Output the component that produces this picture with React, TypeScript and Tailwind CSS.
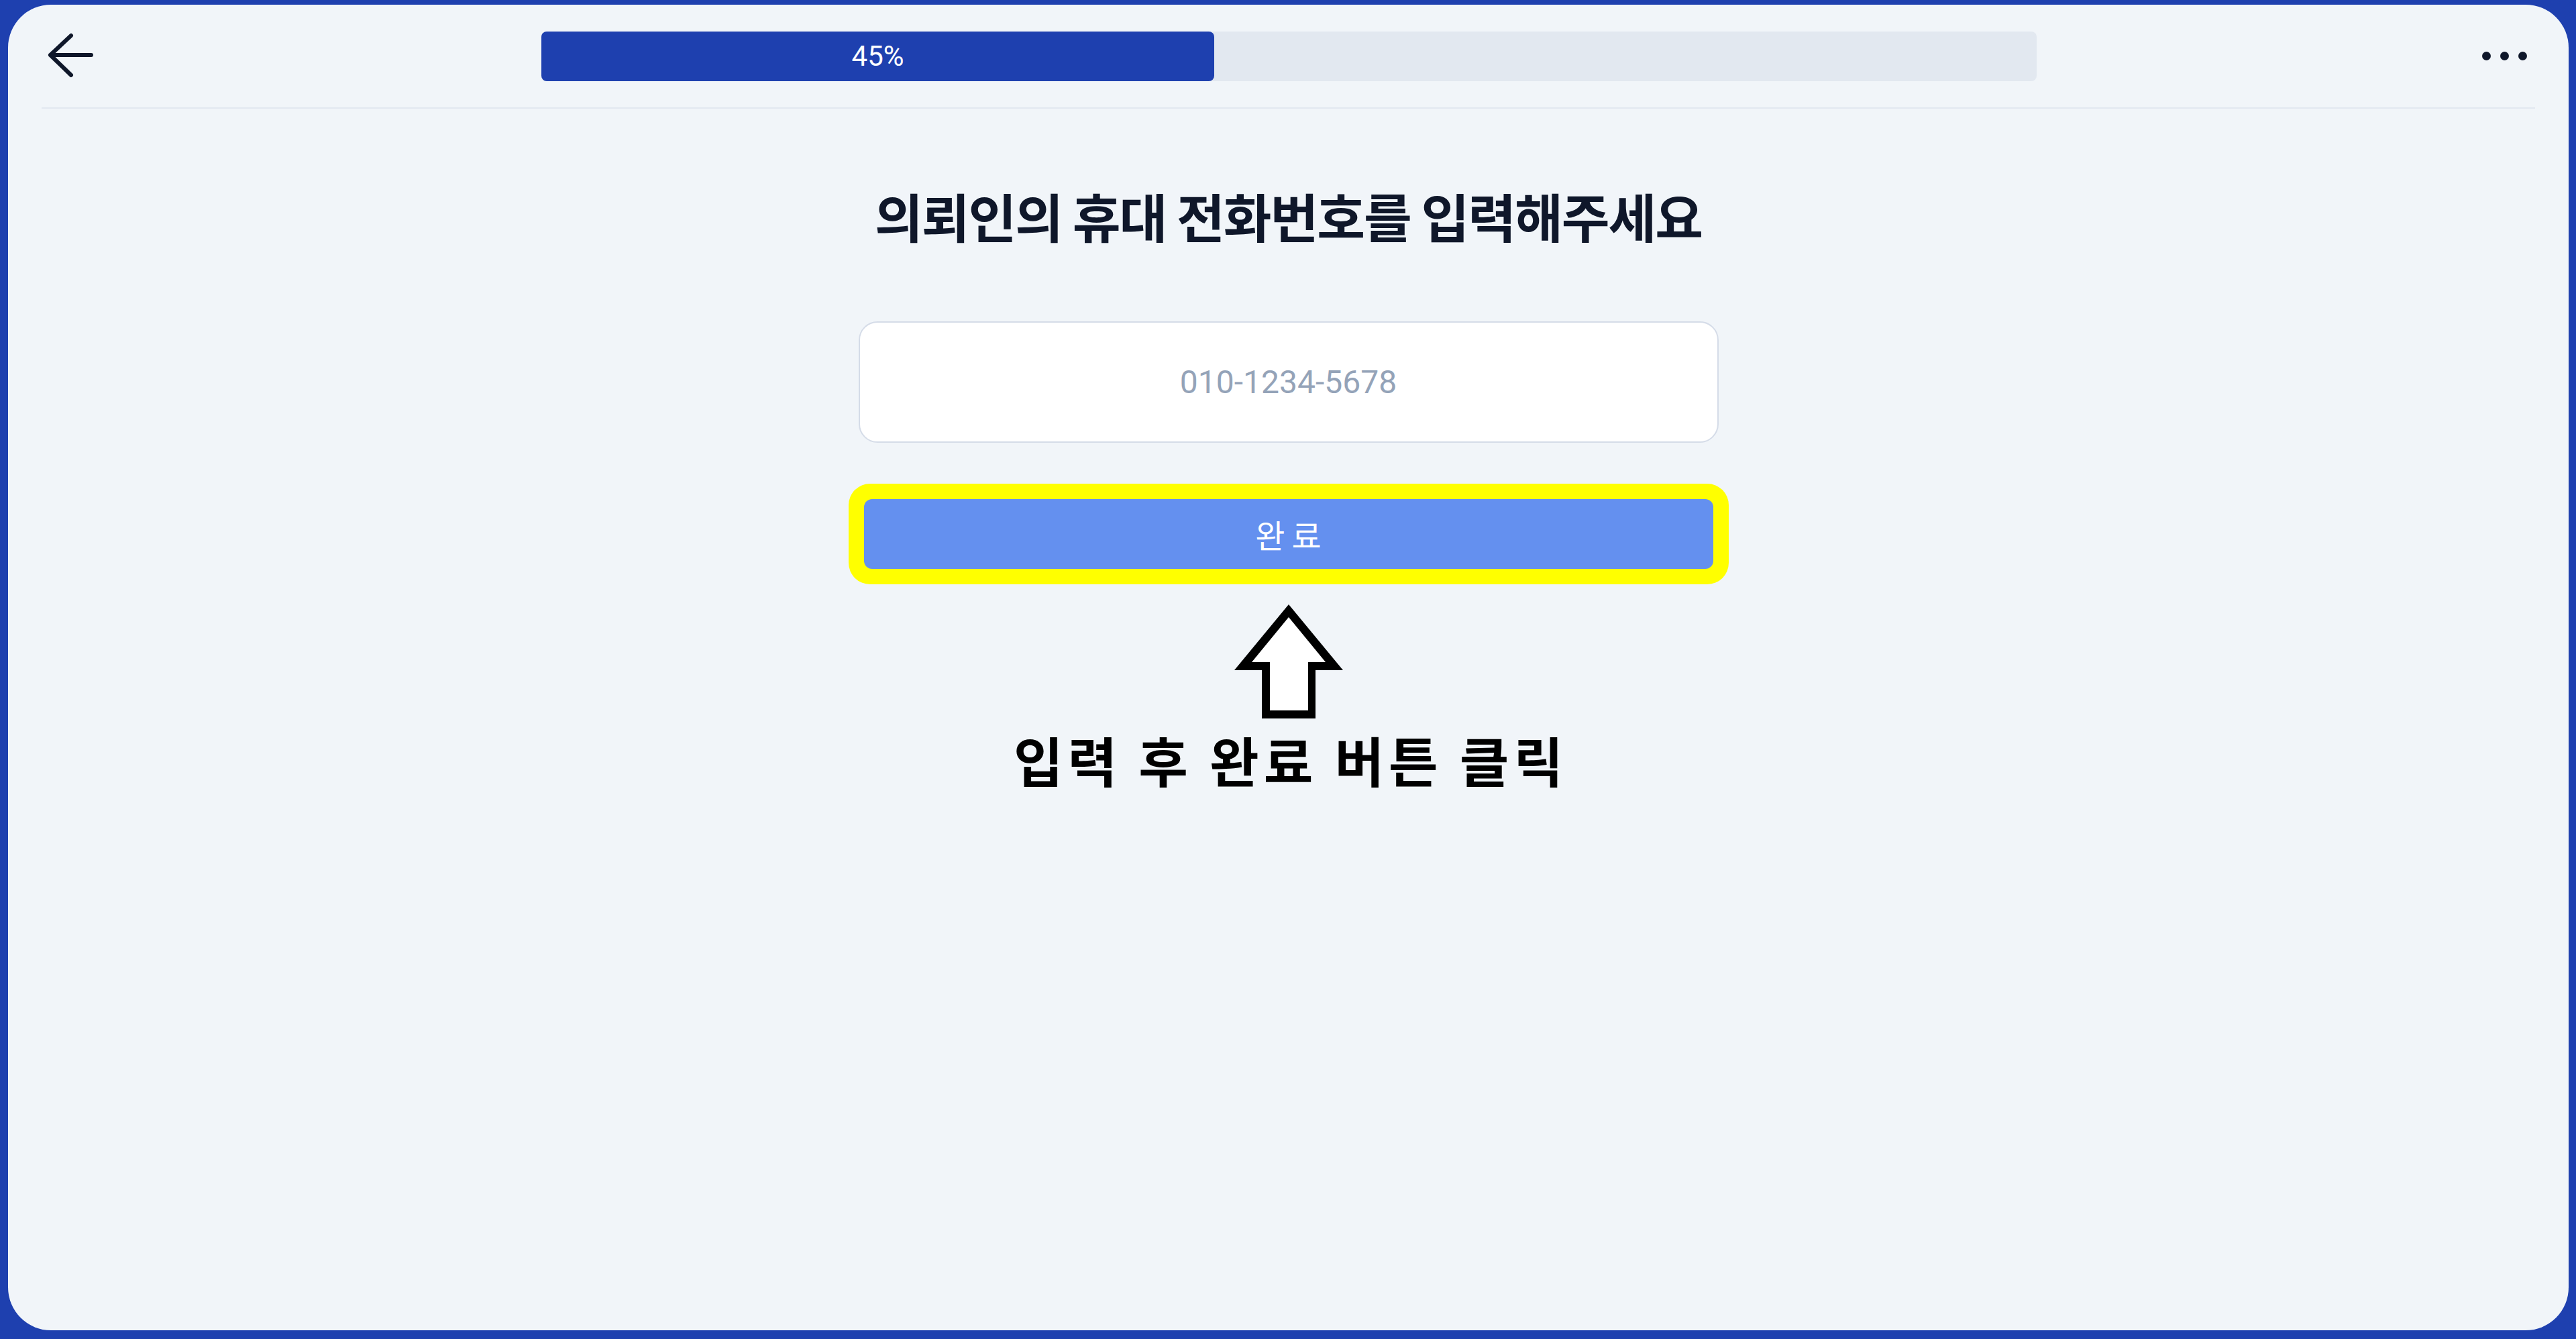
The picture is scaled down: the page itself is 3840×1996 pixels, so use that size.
import { useState } from "react";

function BackArrow() {
  return (
    <svg width="70" height="70" viewBox="0 0 70 70" fill="none">
      <path
        d="M36 4 L5 33 L36 63 M5 33 H66"
        stroke="#0f172a"
        strokeWidth="6"
        strokeLinecap="round"
        strokeLinejoin="round"
      />
    </svg>
  );
}

function UpArrow() {
  return (
    <svg width="170" height="172" viewBox="0 0 170 172">
      <polygon points="85,0 166,98 125,98 125,170 45,170 45,98 4,98" fill="#000" />
      <polygon points="85,19 140,86 114,86 114,158 57,158 57,86 30,86" fill="#fff" />
    </svg>
  );
}

export default function App() {
  const [phone, setPhone] = useState("");
  const progress = 45;

  return (
    <div className="w-full h-[1996px] bg-[#1e40af] pt-[7px] pl-[12px] pr-[11px] pb-[13px]">
      <div className="h-full w-full rounded-[64px] bg-[#f1f5f9] flex flex-col font-['Noto_Sans_CJK_KR',sans-serif]">
        {/* header */}
        <header className="mx-[50px] h-[155px] border-b-2 border-[#e2e8f0] grid grid-cols-[745px_2229px_1fr] items-center">
          <div className="pl-[8px] flex items-center">
            <BackArrow />
          </div>
          <div className="h-[74px] w-full rounded-[8px] bg-[#e2e8f0]">
            <div
              className="h-full rounded-[8px] bg-[#1e40af] flex items-center justify-center"
              style={{ width: `${progress}%` }}
            >
              <span className="text-white text-[42px] font-['Roboto',sans-serif]">{progress}%</span>
            </div>
          </div>
          <div className="flex justify-end items-center gap-[14px] pr-[12px]">
            <span className="w-[13px] h-[13px] rounded-full bg-[#0f172a]" />
            <span className="w-[13px] h-[13px] rounded-full bg-[#0f172a]" />
            <span className="w-[13px] h-[13px] rounded-full bg-[#0f172a]" />
          </div>
        </header>

        {/* body */}
        <main className="flex flex-col items-center">
          <h1 className="mt-[113px] text-[78px] leading-[92px] font-bold tracking-[-2px] text-[#0f172a]">
            의뢰인의 휴대 전화번호를 입력해주세요
          </h1>

          <input
            value={phone}
            onChange={(e) => setPhone(e.target.value)}
            placeholder="010-1234-5678"
            className="mt-[112px] w-[1282px] h-[181px] rounded-[28px] border-2 border-[#d5dce8] bg-white text-center text-[48px] font-['Roboto',sans-serif] text-[#0f172a] placeholder:text-[#94a3b8] outline-none"
          />

          <div className="mt-[61px] w-[1312px] rounded-[32px] bg-[#ffff00] p-[23px]">
            <button className="w-full h-[104px] rounded-[12px] bg-[#6490ef] text-white text-[48px] tracking-[10px] pl-[10px]">
              완료
            </button>
          </div>

          <div className="mt-[30px] ml-[1px]">
            <UpArrow />
          </div>

          <p className="mt-[10px] text-[80px] leading-[96px] font-bold tracking-[7px] pl-[7px] text-black">
            입력 후 완료 버튼 클릭
          </p>
        </main>
      </div>
    </div>
  );
}
